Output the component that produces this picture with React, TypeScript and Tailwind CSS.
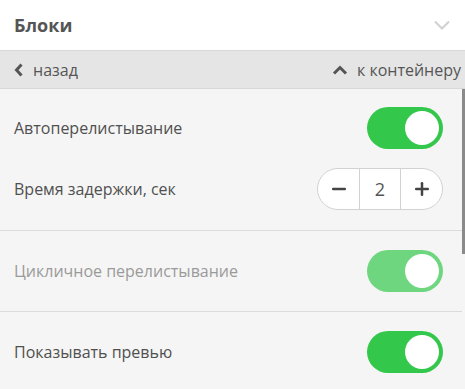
import { Minus, Plus } from "lucide-react";

function Toggle({ on = true, dim = false }: { on?: boolean; dim?: boolean }) {
  return (
    <div
      className={`flex h-[42px] w-[76px] items-center rounded-full p-[4px] ${on ? "justify-end" : "justify-start"} ${
        dim ? "bg-[#6fd680]" : "bg-[#33c74b]"
      }`}
    >
      <div className="h-[34px] w-[34px] rounded-full bg-white" />
    </div>
  );
}

export default function App() {
  return (
    <div className="flex h-[389px] w-[465px] flex-col overflow-hidden bg-[#f5f5f5] font-['Open_Sans',sans-serif] text-[#505050]">
      {/* Header */}
      <div className="flex h-[50px] shrink-0 items-center justify-between bg-white pl-[14px] pr-[15px]">
        <h1 className="text-[18px] font-bold text-[#555]">Блоки</h1>
        <svg width="16" height="10" viewBox="0 0 16 10" fill="none" stroke="#d0d0d0" strokeWidth="2">
          <path d="M1 1.5 8 8.5 15 1.5" />
        </svg>
      </div>

      {/* Nav */}
      <div className="flex h-[39px] shrink-0 items-center justify-between border-y border-[#d8d8d8] bg-[#e5e5e5] pl-[14px] pr-[4px] text-[16px] text-[#555]">
        <div className="flex items-center gap-[10px]">
          <svg width="9" height="14" viewBox="0 0 9 14" fill="none" stroke="#555" strokeWidth="3">
            <path d="M7.5 1.5 2.5 7 7.5 12.5" />
          </svg>
          <span>назад</span>
        </div>
        <div className="flex items-center gap-[9px]">
          <svg width="16" height="10" viewBox="0 0 16 10" fill="none" stroke="#555" strokeWidth="3">
            <path d="M2 8.5 8 2.5 14 8.5" />
          </svg>
          <span>к контейнеру</span>
        </div>
      </div>

      {/* Content */}
      <div className="flex min-h-0 flex-1">
        <div className="flex flex-1 flex-col">
          <div className="flex flex-col gap-[19px] pb-[20px] pl-[14px] pr-[19px] pt-[18px]">
            <div className="flex items-center justify-between">
              <span className="text-[16px]">Автоперелистывание</span>
              <Toggle />
            </div>
            <div className="flex items-center justify-between">
              <span className="text-[16px]">Время задержки, сек</span>
              <div className="flex h-[42px] w-[126px] items-stretch overflow-hidden rounded-full border border-[#d2d2d2] bg-white">
                <button className="flex flex-1 items-center justify-center">
                  <Minus className="h-[20px] w-[20px] text-[#444]" strokeWidth={3} />
                </button>
                <div className="flex w-[42px] items-center justify-center border-x border-[#d2d2d2] text-[18px] text-[#555]">
                  2
                </div>
                <button className="flex flex-1 items-center justify-center">
                  <Plus className="h-[20px] w-[20px] text-[#444]" strokeWidth={3} />
                </button>
              </div>
            </div>
          </div>
          <div className="flex items-center justify-between border-t border-[#dcdcdc] pb-[19px] pl-[14px] pr-[19px] pt-[19px]">
            <span className="text-[16px] text-[#9a9a9a]">Цикличное перелистывание</span>
            <Toggle dim />
          </div>
          <div className="flex items-center justify-between border-t border-[#dcdcdc] pb-[19px] pl-[14px] pr-[19px] pt-[19px]">
            <span className="text-[16px]">Показывать превью</span>
            <Toggle />
          </div>
        </div>
        <div className="w-[3px] shrink-0">
          <div className="h-[165px] w-[3px] bg-[#8a8a8a]" />
        </div>
      </div>
    </div>
  );
}
